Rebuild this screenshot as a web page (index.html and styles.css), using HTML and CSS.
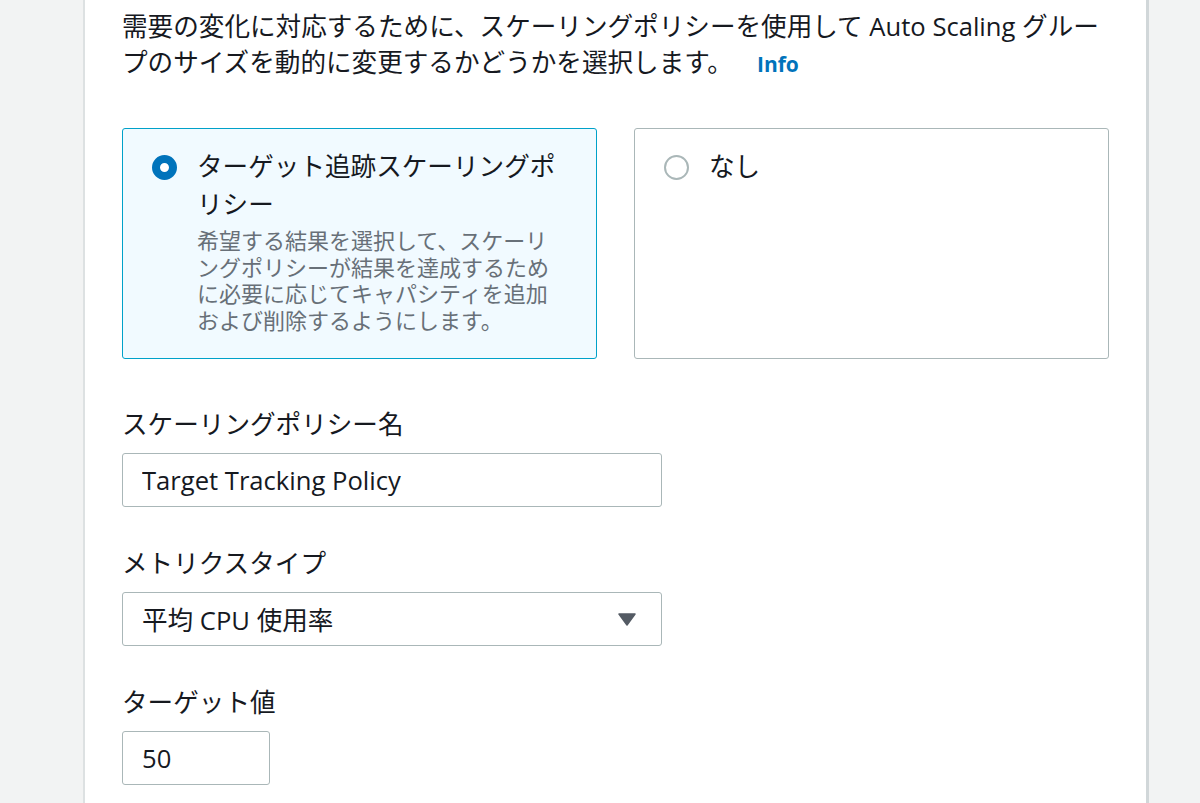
FILE: index.html
```html
<!DOCTYPE html>
<html lang="ja">
<head>
  <meta charset="utf-8">
  <title>スケーリングポリシー</title>
  <link rel="stylesheet" href="styles.css">
</head>
<body>
  <div class="panel">
    <p class="intro">需要の変化に対応するために、スケーリングポリシーを使用して Auto Scaling グループのサイズを動的に変更するかどうかを選択します。<a class="info" href="#">Info</a></p>

    <div class="tiles">
      <label class="tile selected">
        <span class="radio"></span>
        <span class="tile-text">
          <span class="tile-title">ターゲット追跡スケーリングポリシー</span>
          <span class="tile-desc">希望する結果を選択して、スケーリングポリシーが結果を達成するために必要に応じてキャパシティを追加および削除するようにします。</span>
        </span>
      </label>
      <label class="tile">
        <span class="radio"></span>
        <span class="tile-text">
          <span class="tile-title">なし</span>
        </span>
      </label>
    </div>

    <div class="field first">
      <label for="policy_name">スケーリングポリシー名</label>
      <input type="text" id="policy_name" class="control wide" value="Target Tracking Policy">
    </div>

    <div class="field">
      <label>メトリクスタイプ</label>
      <div class="control wide select">
        <span>平均 CPU 使用率</span>
        <svg width="18" height="13" viewBox="0 0 18 13"><polygon points="1,1 17,1 9,12" fill="#545b64" stroke="#545b64" stroke-width="1.5" stroke-linejoin="round"/></svg>
      </div>
    </div>

    <div class="field">
      <label for="target_value">ターゲット値</label>
      <input type="text" id="target_value" class="control narrow" value="50">
    </div>
  </div>
</body>
</html>
```

FILE: styles.css
```css
html {
  font-family: 'Open Sans', 'Noto Sans CJK JP', sans-serif;
}

body {
  margin: 0;
  background: #f2f3f3;
  color: #16191f;
  font-size: 25.6px;
}

.panel {
  margin-left: 83px;
  width: 987px;
  min-height: 100vh;
  padding: 9px 37px 0;
  background: #fff;
  border-left: 2px solid #dde1e2;
  border-right: 3px solid #d1d7d9;
}

.intro {
  margin: 0;
  line-height: 36px;
}

.info {
  display: inline-block;
  margin-left: 24px;
  font-size: 21px;
  line-height: 24px;
  font-weight: 700;
  color: #0073bb;
  text-decoration: none;
}

.tiles {
  display: grid;
  grid-template-columns: 1fr 1fr;
  gap: 37px;
  margin-top: 47px;
}

.tile {
  display: flex;
  gap: 20px;
  padding: 19px 29px 25px;
  border: 1px solid #aab7b8;
  border-radius: 3px;
  background: #fff;
}

.tile.selected {
  border-color: #00a1c9;
  background: #f1faff;
}

.radio {
  flex: none;
  box-sizing: border-box;
  width: 25px;
  height: 25px;
  margin-top: 7px;
  border: 2px solid #aab7b8;
  border-radius: 50%;
  background: #fff;
}

.selected .radio {
  border: 8px solid #0073bb;
}

.tile-text {
  display: flex;
  flex-direction: column;
  width: 370px;
}

.tile-title {
  line-height: 38px;
}

.tile-desc {
  margin-top: 3px;
  font-size: 22px;
  line-height: 26.5px;
  color: #687078;
}

.field {
  margin-top: 39px;
}

.field.first {
  margin-top: 48px;
}

.field label {
  display: block;
  line-height: 36px;
  margin-bottom: 10px;
}

.control {
  box-sizing: border-box;
  height: 54px;
  padding: 0 19px;
  border: 1px solid #aab7b8;
  border-radius: 3px;
  background: #fff;
  font: inherit;
  color: #16191f;
  outline: none;
}

.wide {
  width: 540px;
}

.narrow {
  width: 148px;
}

.select {
  display: flex;
  align-items: center;
  justify-content: space-between;
  padding-right: 25px;
}
```
